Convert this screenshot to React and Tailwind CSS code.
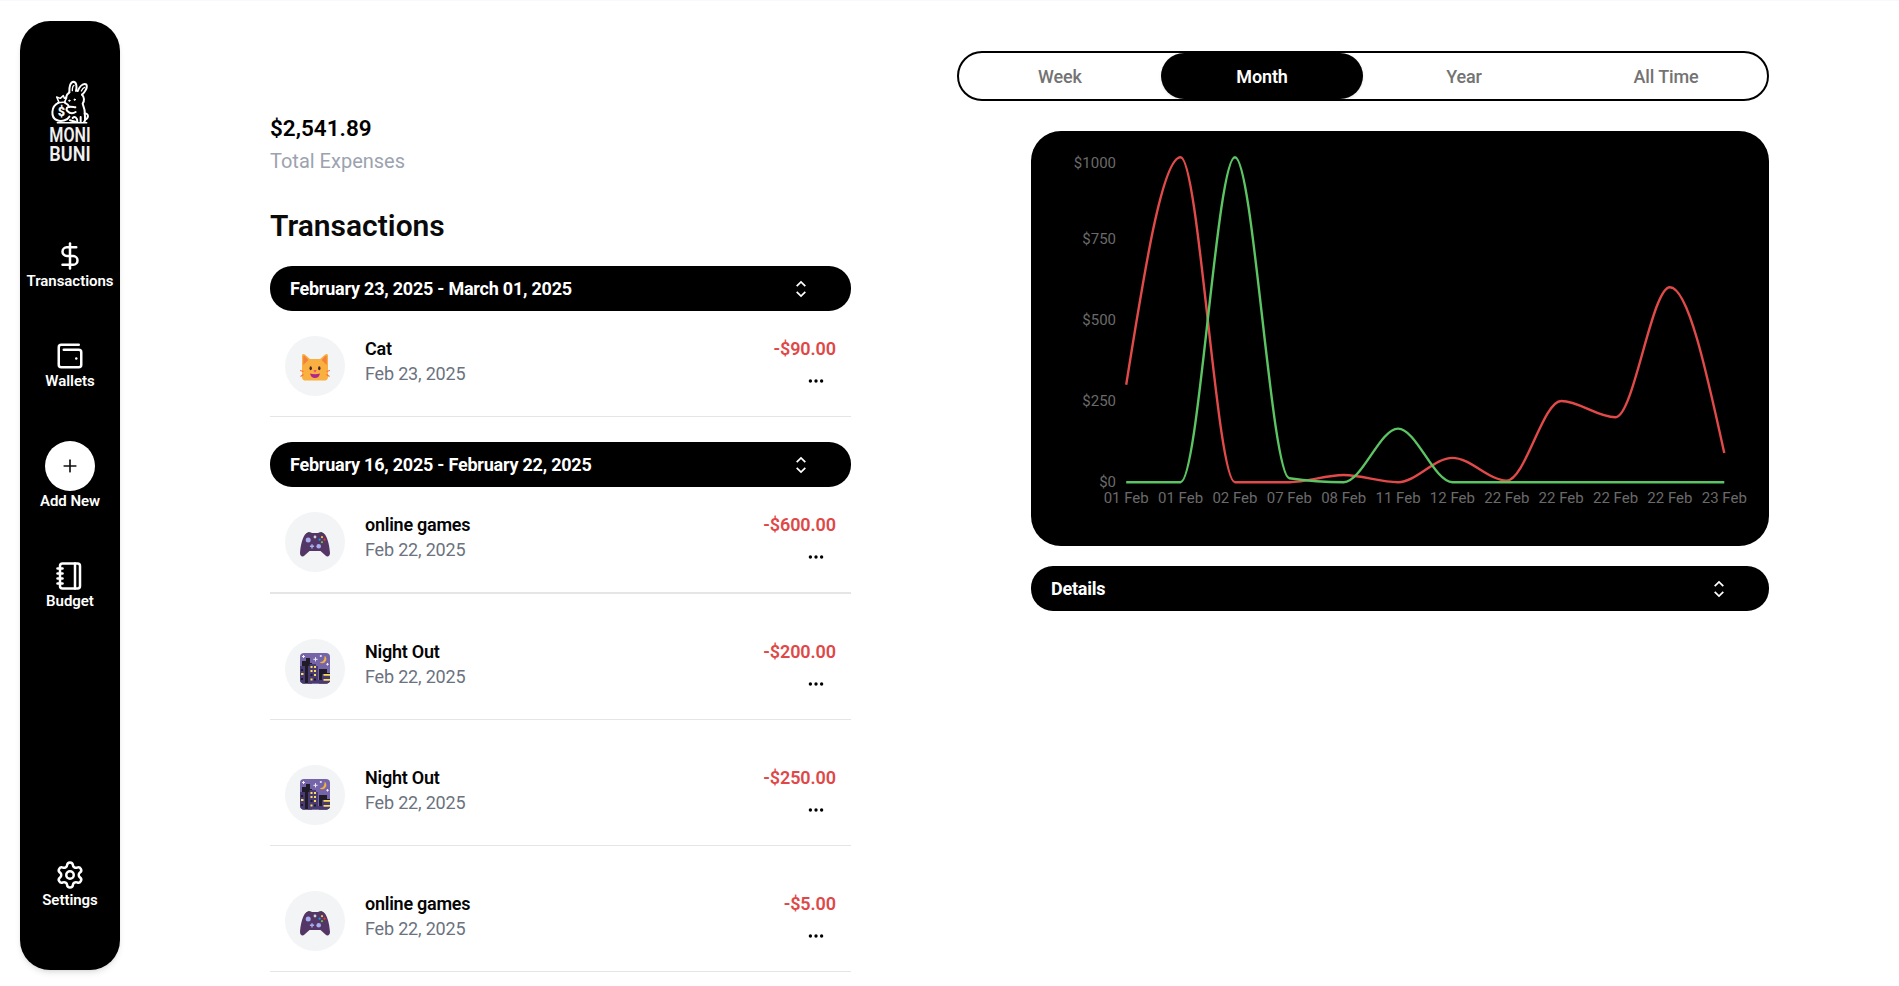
import React from "react";
import { DollarSign, WalletMinimal, Notebook, Settings, Plus } from "lucide-react";
import { BsThreeDots } from "react-icons/bs";

function Logo() {
  return (
    <svg width="60" height="100" viewBox="0 0 180 300" className="shrink-0" fill="none" stroke="#fff" strokeWidth="6" strokeLinecap="round" strokeLinejoin="round">
      <path d="M88 67C87 51 91 35 101 35C110 37 111 51 108 63" />
      <path d="M113 63C118 51 128 39 139 43C144 53 134 67 126 74" />
      <path d="M97 62C97 54 99 47 102 46M124 63C127 57 131 53 134 52" strokeWidth="4" />
      <path d="M88 67C82 71 79 76 78 83M126 74C133 81 134 93 128 101C133 113 136 125 135 141C136 149 136 153 132 156" />
      <path d="M134 131C145 129 148 142 136 149" />
      <circle cx="88" cy="92" r="2" fill="#fff" strokeWidth="3" />
      <circle cx="104" cy="89" r="2" fill="#fff" strokeWidth="3" />
      <path d="M56 98C32 109 32 142 50 150C64 157 82 151 88 140M74 98C82 102 86 106 88 111" />
      <path d="M54 98L76 96M56 95L50 81L61 85L70 77L73 85L80 83L74 95" strokeWidth="4.5" />
      <path d="M81 113C88 107 98 111 106 112M82 123C90 131 99 131 107 126M82 113C79 116 79 120 82 123" />
      <path d="M98 144C104 137 112 143 112 155M122 141V155M90 151L106 155" />
      <path d="M52 158H140" strokeWidth="4.5" />
      <text x="64" y="137" textAnchor="middle" fill="#fff" stroke="#fff" strokeWidth="1" fontFamily="Roboto, sans-serif" fontWeight="700" fontSize="36">$</text>
      <text x="28" y="217" textLength="124" lengthAdjust="spacingAndGlyphs" fill="#f0f0f0" stroke="none" fontFamily="Roboto, sans-serif" fontWeight="600" fontSize="62">MONI</text>
      <text x="28" y="273" textLength="124" lengthAdjust="spacingAndGlyphs" fill="#f0f0f0" stroke="none" fontFamily="Roboto, sans-serif" fontWeight="600" fontSize="62">BUNI</text>
    </svg>
  );
}

function NavItem({ icon, label }) {
  return (
    <a className="flex flex-col items-center text-white">
      {icon}
      <span className="text-[15px] leading-5 font-semibold tracking-[-0.04px]">{label}</span>
    </a>
  );
}

function Sidebar() {
  return (
    <aside className="flex h-[949px] w-[100px] shrink-0 flex-col items-center rounded-[30px] bg-black pt-[49px] pb-[60px] shadow-md">
      <Logo />
      <nav className="mt-[71px] flex flex-1 flex-col items-center gap-[50px]">
        <NavItem icon={<DollarSign size={30} strokeWidth={2} />} label="Transactions" />
        <NavItem icon={<WalletMinimal size={30} strokeWidth={2} />} label="Wallets" />
        <NavItem
          icon={
            <span className="flex size-[50px] items-center justify-center rounded-full bg-white text-[#111]">
              <Plus size={20} strokeWidth={2} />
            </span>
          }
          label="Add New"
        />
        <NavItem icon={<Notebook size={30} strokeWidth={2} />} label="Budget" />
      </nav>
      <NavItem icon={<Settings size={30} strokeWidth={2} />} label="Settings" />
    </aside>
  );
}

function UpDown() {
  return (
    <svg width="24" height="24" viewBox="0 0 24 24" fill="none" stroke="currentColor" strokeWidth="1.7">
      <path d="M7.7 9.2L12 4.9L16.3 9.2M7.7 14.8L12 19.1L16.3 14.8" />
    </svg>
  );
}

function Bar({ children }) {
  return (
    <button className="flex h-[45px] w-full items-center justify-between rounded-[22px] bg-black pr-[38px] pl-5 text-lg font-bold tracking-[-0.23px] text-white">
      <span>{children}</span>
      <UpDown />
    </button>
  );
}

function CatIcon() {
  return (
    <svg width="30" height="31" viewBox="0 0 30 31">
      <path d="M2 6C2 4 3.5 3.6 4.8 4.6L10 9H20L25.200 4.600C26.500 3.600 28 4 28 6V27C28 29.500 26.500 30.600 24 30.600H6C3.500 30.600 2 29.500 2 27Z" fill="#f9b040" />
      <path d="M3.300 7C3.300 5.600 4.200 5.400 5 6.200L8.400 10L3.300 15ZM26.700 7C26.700 5.600 25.800 5.400 25 6.200L21.600 10L26.700 15Z" fill="#f3803f" />
      <path d="M0 20.500L3.500 21.500M0.500 26.500L3.500 24.500M30 20.500L26.500 21.500M29.500 26.500L26.500 24.500" stroke="#f3703a" strokeWidth="1.200" />
      <ellipse cx="10.700" cy="18.300" rx="1.200" ry="2" fill="#43262f" />
      <ellipse cx="19.300" cy="18.300" rx="1.200" ry="2" fill="#43262f" />
      <path d="M13.400 20.200H16.600L15 22.400Z" fill="#f4338a" />
      <path d="M10 23.500Q15 25 20 23.500Q19 28 15 28Q11 28 10 23.500Z" fill="#b0278c" />
    </svg>
  );
}

function GameIcon() {
  return (
    <svg width="30" height="31" viewBox="0 0 30 31">
      <path d="M6 8C7 6 10 6 12 7H18C20 6 23 6 24 8Z" fill="#1c1c1c" />
      <path d="M5 8.500C6 7.200 8 7 10 7H20C22 7 24 7.200 25 8.500C28 13 29.500 20 30 27C30 30 27.500 31.500 25.500 29.500L20.500 25H9.500L4.500 29.500C2.500 31.500 0 30 0 27C0.500 20 2 13 5 8.500Z" fill="#533566" />
      <circle cx="8.200" cy="14" r="2.500" fill="#a6aeef" />
      <circle cx="18.700" cy="20.300" r="2.300" fill="#a6aeef" />
      <path d="M12 18.200V22.400M9.900 20.300H14.100" stroke="#a6aeef" strokeWidth="1.400" />
      <circle cx="15" cy="11" r="1.400" fill="#d5d3dd" />
      <circle cx="22" cy="11.200" r="1.100" fill="#fcc530" />
      <circle cx="24.500" cy="13.700" r="1.100" fill="#f8312f" />
      <circle cx="22" cy="16.200" r="1.100" fill="#66c22e" />
      <circle cx="19.600" cy="13.700" r="1.100" fill="#1498ef" />
    </svg>
  );
}

function NightIcon() {
  return (
    <svg width="30" height="31" viewBox="0 0 30 31">
      <clipPath id="night">
        <rect width="30" height="30.500" rx="4" />
      </clipPath>
      <g clipPath="url(#night)">
        <rect width="30" height="31" fill="#7565a8" />
        <path d="M2 12V8H6V5H10V10H12V31H2ZM19 31V16H27V20H30V31Z" fill="#1f1c27" />
        <path d="M0 13H5V31H0ZM8 13H9.500V11H16V13H18V31H8ZM22 21H30V31H14V27H22Z" fill="#493a73" />
        <path d="M10.500 13H12.500V15H10.500ZM14 13H16V15H14ZM10.500 17H12.500V19H10.500ZM14 17H16V19H14ZM14 21H16V23H14ZM10.500 25.500H12.500V27.500H10.500ZM1 20H3.500V22H1ZM23.500 21H30V22.700H23.500ZM23.500 26H30V27.700H23.500Z" fill="#fbe057" />
        <path d="M10.500 21H12.500V23H10.500ZM14 25.500H16V27.500H14ZM1 16H3V18H1ZM1 25H3V27H1Z" fill="#1f1c27" />
        <path d="M25 3.500C27.500 7 24.500 11 20.500 9.500C23 9.200 25 7.500 25 3.500Z" fill="#fbb93a" stroke="#fbb93a" strokeWidth="0.800" />
        <path d="M15.500 4.200V8.400M13.400 6.300H17.600M3.500 2V5M2 3.500H5M27.500 10V12.600M26.200 11.300H28.800M20.800 2V4M19.800 3H21.800" stroke="#efeafc" strokeWidth="1" />
      </g>
    </svg>
  );
}

const icons = { cat: CatIcon, game: GameIcon, night: NightIcon };

function Row({ icon, name, date, amount, first, thick }) {
  const Icon = icons[icon];
  return (
    <div className={`flex items-start border-[#e5e5e5] pb-5 pr-[15px] pl-[15px] ${first ? "pt-[25px]" : "pt-[45px]"} ${thick ? "border-b-2" : "border-b"}`}>
      <div className="flex size-[60px] items-start justify-center rounded-full bg-gray-100 pt-[14px]">
        <Icon />
      </div>
      <div className="ml-5 flex flex-1 flex-col text-lg leading-[25px]">
        <span className="font-semibold tracking-[-0.25px] text-[#050505]">{name}</span>
        <span className="tracking-[-0.18px] text-[#6b7280]">{date}</span>
      </div>
      <div className="flex flex-col items-end text-lg leading-[25px]">
        <span className="font-semibold tracking-[-0.08px] text-[#e04848]">{amount}</span>
        <BsThreeDots size={18} className="mt-[11px] mr-[11px] text-black" />
      </div>
    </div>
  );
}

const groups = [
  {
    title: "February 23, 2025 - March 01, 2025",
    rows: [{ icon: "cat", name: "Cat", date: "Feb 23, 2025", amount: "-$90.00" }],
  },
  {
    title: "February 16, 2025 - February 22, 2025",
    rows: [
      { icon: "game", name: "online games", date: "Feb 22, 2025", amount: "-$600.00", thick: true },
      { icon: "night", name: "Night Out", date: "Feb 22, 2025", amount: "-$200.00" },
      { icon: "night", name: "Night Out", date: "Feb 22, 2025", amount: "-$250.00" },
      { icon: "game", name: "online games", date: "Feb 22, 2025", amount: "-$5.00" },
    ],
  },
];

const labels = ["01 Feb", "01 Feb", "02 Feb", "07 Feb", "08 Feb", "11 Feb", "12 Feb", "22 Feb", "22 Feb", "22 Feb", "22 Feb", "23 Feb"];
const expenses = [300, 1000, 0, 0, 22, 0, 75, 5, 250, 200, 600, 90];
const income = [0, 0, 1000, 12, 0, 165, 0, 0, 0, 0, 0, 0];
const px = (i) => 95.2 + i * 54.37;
const py = (v) => 351.2 - v * 0.325;

// Monotone cubic interpolation through the data points
function monotone(values) {
  const pts = values.map((v, i) => [px(i), py(v)]);
  const n = pts.length;
  const s = [];
  for (let i = 0; i < n - 1; i++) s.push((pts[i + 1][1] - pts[i][1]) / (pts[i + 1][0] - pts[i][0]));
  const t = new Array(n);
  for (let i = 1; i < n - 1; i++) {
    const p = (s[i - 1] + s[i]) / 2;
    t[i] = (Math.sign(s[i - 1]) + Math.sign(s[i])) * Math.min(Math.abs(s[i - 1]), Math.abs(s[i]), 0.5 * Math.abs(p));
  }
  t[0] = (3 * s[0] - t[1]) / 2;
  t[n - 1] = (3 * s[n - 2] - t[n - 2]) / 2;
  let d = `M${pts[0][0]},${pts[0][1]}`;
  for (let i = 0; i < n - 1; i++) {
    const [x0, y0] = pts[i];
    const [x1, y1] = pts[i + 1];
    const h = (x1 - x0) / 3;
    d += `C${x0 + h},${y0 + h * t[i]},${x1 - h},${y1 - h * t[i + 1]},${x1},${y1}`;
  }
  return d;
}

function Chart() {
  const ticks = [["$1000", 37], ["$750", 113], ["$500", 194], ["$250", 275], ["$0", 356]];
  return (
    <div className="h-[415px] w-[738px] overflow-hidden rounded-[30px] bg-black">
      <svg width="738" height="415" fill="none" fontSize="15" className="font-normal">
        {ticks.map(([l, y]) => (
          <text key={l} x="85" y={y} textAnchor="end" fill="#6a6a6a">{l}</text>
        ))}
        {labels.map((l, i) => (
          <text key={i} x={px(i)} y="372" textAnchor="middle" fill="#6a6a6a">{l}</text>
        ))}
        <path d={monotone(expenses)} stroke="#e24a4a" strokeWidth="2.4" />
        <path d={monotone(income)} stroke="#5bc463" strokeWidth="2.4" />
      </svg>
    </div>
  );
}

export default function App() {
  return (
    <div className="flex h-[986px] w-[1899px] overflow-hidden border-t border-[#f8f8ff] bg-white pt-5 pl-5 font-[Roboto,sans-serif]">
      <Sidebar />
      <section className="ml-[150px] w-[581px] pt-[90px]">
        <div className="text-[22.5px] leading-[34px] font-semibold text-black">$2,541.89</div>
        <div className="text-xl leading-[33px] text-[#9ca3af]">Total Expenses</div>
        <h1 className="mt-[25px] mb-[18px] text-[30px] leading-[45px] font-semibold text-[#0a0a0a]">Transactions</h1>
        <div className="flex flex-col gap-[25px]">
          {groups.map((g) => (
            <div key={g.title}>
              <Bar>{g.title}</Bar>
              {g.rows.map((r, i) => (
                <Row key={i} first={i === 0} {...r} />
              ))}
            </div>
          ))}
        </div>
      </section>
      <section className="ml-[106px] flex w-[812px] flex-col items-end pt-[30px]">
        <div className="grid h-[50px] w-full grid-cols-4 rounded-full border-2 border-black text-lg font-medium tracking-[-0.12px] text-[#737373]">
          <button className="pt-0.5">Week</button>
          <button className="rounded-full bg-black pt-0.5 font-semibold text-white shadow">Month</button>
          <button className="pt-0.5">Year</button>
          <button className="pt-0.5">All Time</button>
        </div>
        <div className="mt-[30px] mb-5">
          <Chart />
        </div>
        <div className="w-[738px]">
          <Bar>Details</Bar>
        </div>
      </section>
    </div>
  );
}
